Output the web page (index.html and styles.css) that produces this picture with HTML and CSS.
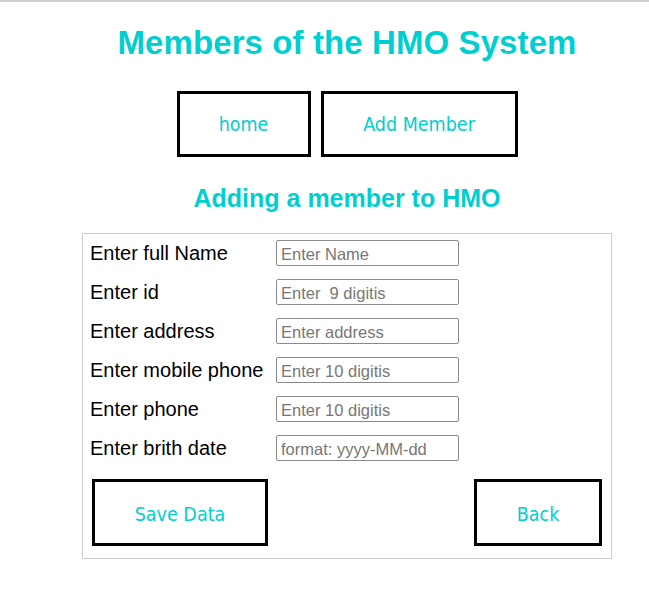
FILE: index.html
```html
<!DOCTYPE html>
<html lang="en">
<head>
<meta charset="utf-8">
<title>Members of the HMO System</title>
<link rel="stylesheet" href="styles.css">
</head>
<body>
<div class="page">
  <h1 class="title">Members of the HMO System</h1>
  <nav class="nav">
    <button class="btn btn-home" type="button">home</button>
    <button class="btn btn-add" type="button">Add Member</button>
  </nav>
  <h2 class="subtitle">Adding a member to HMO</h2>
  <form class="card">
    <div class="fields">
      <label class="label" for="name">Enter full Name</label>
      <input class="input" id="name" type="text" placeholder="Enter Name">
      <label class="label" for="id">Enter id</label>
      <input class="input" id="id" type="text" placeholder="Enter  9 digitis">
      <label class="label" for="address">Enter address</label>
      <input class="input" id="address" type="text" placeholder="Enter address">
      <label class="label" for="mobile">Enter mobile phone</label>
      <input class="input" id="mobile" type="text" placeholder="Enter 10 digitis">
      <label class="label" for="phone">Enter phone</label>
      <input class="input" id="phone" type="text" placeholder="Enter 10 digitis">
      <label class="label" for="birth">Enter brith date</label>
      <input class="input" id="birth" type="text" placeholder="format: yyyy-MM-dd">
    </div>
    <div class="actions">
      <button class="btn btn-save" type="button">Save Data</button>
      <button class="btn btn-back" type="button">Back</button>
    </div>
  </form>
</div>
</body>
</html>
```
FILE: styles.css
```css
html, body {
  margin: 0;
  padding: 0;
  background: #ffffff;
}

body {
  border-top: 2px solid #cfcfcf;
  font-family: "Liberation Sans", Arial, sans-serif;
}

.page {
  padding-left: 45px;
  display: flex;
  flex-direction: column;
  align-items: center;
}

.title {
  margin: 22px 0 0;
  font-size: 33px;
  line-height: 38px;
  font-weight: bold;
  letter-spacing: 0.1px;
  color: #00ced1;
}

.nav {
  margin-top: 29px;
  display: flex;
  gap: 10px;
}

.btn {
  box-sizing: border-box;
  height: 66px;
  border: 3px solid #000;
  background: #fff;
  color: #00ced1;
  font-family: "DejaVu Sans Condensed", "DejaVu Sans", sans-serif;
  font-size: 19.5px;
  padding: 0;
  display: flex;
  align-items: center;
  justify-content: center;
}

.btn-home { width: 134px; }
.btn-add { width: 197px; }
.btn-save { width: 176px; height: 67px; padding-top: 3px; }
.btn-back { width: 128px; height: 67px; padding-top: 3px; }

.subtitle {
  margin: 27px 0 0;
  font-size: 25px;
  line-height: 28px;
  font-weight: bold;
  color: #00ced1;
}

.card {
  box-sizing: border-box;
  width: 530px;
  margin-top: 21px;
  border: 1px solid #cccccc;
  padding: 6px 0 12px;
}

.fields {
  display: grid;
  grid-template-columns: 186px 183px;
  row-gap: 13px;
  align-items: center;
  padding-left: 7px;
}

.label {
  font-size: 20px;
  color: #000;
  white-space: nowrap;
}

.input {
  box-sizing: border-box;
  width: 183px;
  height: 26px;
  margin: 0;
  padding: 2px 4px 0;
  border: 1px solid #8a8a8a;
  border-radius: 2px;
  font-family: "Liberation Sans", Arial, sans-serif;
  font-size: 16.5px;
  color: #000;
  background: #fff;
}

.input::placeholder {
  color: #777777;
}

.actions {
  margin-top: 18px;
  padding: 0 9px;
  display: flex;
  justify-content: space-between;
}
```
